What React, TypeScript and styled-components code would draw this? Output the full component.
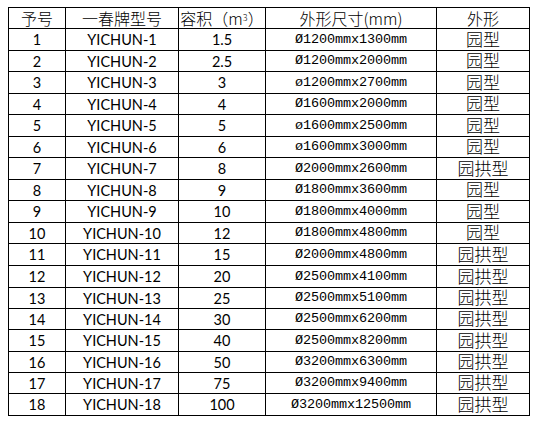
import styled, {createGlobalStyle} from "styled-components";

const GlobalStyle = createGlobalStyle`
  html, body {
    margin: 0;
    padding: 0;
    background: #fff;
  }
`;

type Kind = 'head' | 'num' | 'dim' | 'shape';

interface Row {
  id: number
  volume: string
  size: string
  shape: string
}

const rows: Row[] = [
  {id: 1, volume: '1.5', size: 'Ø1200mmx1300mm', shape: '园型'},
  {id: 2, volume: '2.5', size: 'Ø1200mmx2000mm', shape: '园型'},
  {id: 3, volume: '3', size: 'ø1200mmx2700mm', shape: '园型'},
  {id: 4, volume: '4', size: 'Ø1600mmx2000mm', shape: '园型'},
  {id: 5, volume: '5', size: 'ø1600mmx2500mm', shape: '园型'},
  {id: 6, volume: '6', size: 'ø1600mmx3000mm', shape: '园型'},
  {id: 7, volume: '8', size: 'Ø2000mmx2600mm', shape: '园拱型'},
  {id: 8, volume: '9', size: 'Ø1800mmx3600mm', shape: '园型'},
  {id: 9, volume: '10', size: 'Ø1800mmx4000mm', shape: '园型'},
  {id: 10, volume: '12', size: 'Ø1800mmx4800mm', shape: '园型'},
  {id: 11, volume: '15', size: 'Ø2000mmx4800mm', shape: '园拱型'},
  {id: 12, volume: '20', size: 'Ø2500mmx4100mm', shape: '园拱型'},
  {id: 13, volume: '25', size: 'Ø2500mmx5100mm', shape: '园拱型'},
  {id: 14, volume: '30', size: 'Ø2500mmx6200mm', shape: '园拱型'},
  {id: 15, volume: '40', size: 'Ø2500mmx8200mm', shape: '园拱型'},
  {id: 16, volume: '50', size: 'Ø3200mmx6300mm', shape: '园拱型'},
  {id: 17, volume: '75', size: 'Ø3200mmx9400mm', shape: '园拱型'},
  {id: 18, volume: '100', size: 'Ø3200mmx12500mm', shape: '园拱型'},
];

// interior heights between the ruled lines
const rowHeights = [20, 21, 20, 21, 20, 21, 20, 21, 20, 21, 20, 21, 21, 20, 20, 21, 20, 20, 21];

const Page = styled.div`
  padding: 7px 0 0 8px;
`;

const Table = styled.div`
  display: inline-grid;
  grid-template-columns: 56px 112px 86px 170px 92px;
  grid-template-rows: ${rowHeights.map(h => `${h}px`).join(' ')};
  gap: 1px;
  padding: 1px;
  background: #000;
`;

const Cell = styled.div<{ $kind: Kind }>`
  display: flex;
  align-items: center;
  justify-content: center;
  min-height: 0;
  background: #fff;
  color: #000;
  white-space: nowrap;
  line-height: 16px;
  ${({$kind}) => {
    switch ($kind) {
      case 'head':
        return `font-family: "Noto Sans CJK SC", sans-serif; font-size: 16px; font-weight: 300; padding-bottom: 1px;`;
      case 'shape':
        return `font-family: "Noto Sans CJK SC", sans-serif; font-size: 17px; font-weight: 300; padding-bottom: 2px;`;
      case 'dim':
        return `font-family: "Liberation Mono", monospace; font-size: 13.5px; letter-spacing: -0.1px;`;
      default:
        return `font-family: Lato, "Open Sans", sans-serif; font-size: 14.5px; padding-top: 1px;`;
    }
  }}
`;

const Sup = styled.sup`
  font-size: 9px;
  line-height: 0;
  vertical-align: 6px;
`;

export default function App() {
  return (
    <>
      <GlobalStyle/>
      <Page>
        <Table role={'table'}>
          <Cell $kind={'head'}>予号</Cell>
          <Cell $kind={'head'}>一春牌型号</Cell>
          <Cell $kind={'head'}>容积（m<Sup>3</Sup>）</Cell>
          <Cell $kind={'head'}>外形尺寸(mm)</Cell>
          <Cell $kind={'head'}>外形</Cell>
          {rows.map(row => [
            <Cell key={`a${row.id}`} $kind={'num'}>{row.id}</Cell>,
            <Cell key={`b${row.id}`} $kind={'num'}>YICHUN-{row.id}</Cell>,
            <Cell key={`c${row.id}`} $kind={'num'}>{row.volume}</Cell>,
            <Cell key={`d${row.id}`} $kind={'dim'}>{row.size}</Cell>,
            <Cell key={`e${row.id}`} $kind={'shape'}>{row.shape}</Cell>,
          ])}
        </Table>
      </Page>
    </>
  )
}
